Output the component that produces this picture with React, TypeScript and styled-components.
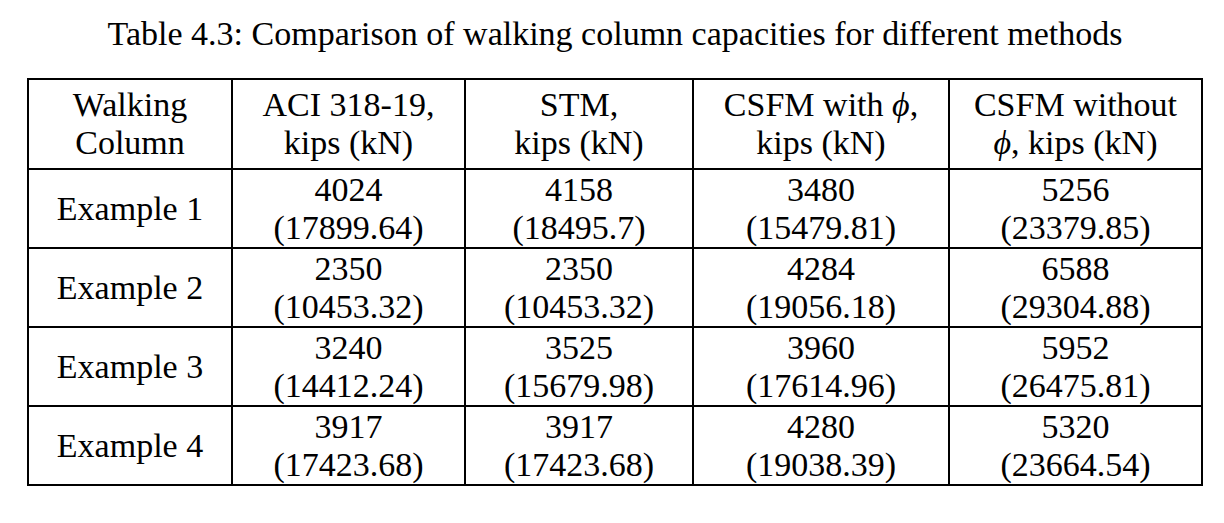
import React from "react";
import styled, { createGlobalStyle } from "styled-components";

interface Row {
  label: string;
  values: [string, string][];
}

const rows: Row[] = [
  {
    label: "Example 1",
    values: [
      ["4024", "(17899.64)"],
      ["4158", "(18495.7)"],
      ["3480", "(15479.81)"],
      ["5256", "(23379.85)"],
    ],
  },
  {
    label: "Example 2",
    values: [
      ["2350", "(10453.32)"],
      ["2350", "(10453.32)"],
      ["4284", "(19056.18)"],
      ["6588", "(29304.88)"],
    ],
  },
  {
    label: "Example 3",
    values: [
      ["3240", "(14412.24)"],
      ["3525", "(15679.98)"],
      ["3960", "(17614.96)"],
      ["5952", "(26475.81)"],
    ],
  },
  {
    label: "Example 4",
    values: [
      ["3917", "(17423.68)"],
      ["3917", "(17423.68)"],
      ["4280", "(19038.39)"],
      ["5320", "(23664.54)"],
    ],
  },
];

// widths between border centres, measured off the reference
const colWidths = [204, 233, 228, 256, 253];

const App: React.FC = () => (
  <Page>
    <GlobalStyle />
    <Caption>Table 4.3: Comparison of walking column capacities for different methods</Caption>
    <Table>
      <colgroup>
        {colWidths.map((w, i) => (
          <col key={i} style={{ width: w }} />
        ))}
      </colgroup>
      <thead>
        <HeadRow>
          <Cell>
            <Line>Walking</Line>
            <Line>Column</Line>
          </Cell>
          <Cell>
            <Line>ACI 318-19,</Line>
            <Line>kips (kN)</Line>
          </Cell>
          <Cell>
            <Line>STM,</Line>
            <Line>kips (kN)</Line>
          </Cell>
          <Cell>
            <Line>
              CSFM with <Phi>ϕ</Phi>,
            </Line>
            <Line>kips (kN)</Line>
          </Cell>
          <Cell>
            <Line>CSFM without</Line>
            <Line>
              <Phi>ϕ</Phi>, kips (kN)
            </Line>
          </Cell>
        </HeadRow>
      </thead>
      <tbody>
        {rows.map((row) => (
          <BodyRow key={row.label}>
            <Cell>
              <Line>{row.label}</Line>
            </Cell>
            {row.values.map(([kips, kn], i) => (
              <Cell key={i}>
                <Line>{kips}</Line>
                <Line>{kn}</Line>
              </Cell>
            ))}
          </BodyRow>
        ))}
      </tbody>
    </Table>
  </Page>
);

const GlobalStyle = createGlobalStyle`
  html, body {
    margin: 0;
    padding: 0;
    background: #ffffff;
  }
  body {
    font-family: "Liberation Serif", "Times New Roman", serif;
    color: #000000;
  }
`;

const Page = styled.div`
  width: 1224px;
  height: 523px;
  padding: 14px 0 0 27px;
  box-sizing: border-box;
  display: flex;
  flex-direction: column;
  align-items: flex-start;
`;

const Caption = styled.div`
  width: 1176px;
  text-align: center;
  font-size: 34px;
  line-height: 40px;
  margin-bottom: 24px;
`;

const Table = styled.table`
  border-collapse: collapse;
  table-layout: fixed;
  width: 1176px;
  border: 2px solid #000;
`;

const HeadRow = styled.tr`
  height: 90px;
`;

const BodyRow = styled.tr`
  height: 79px;
`;

const Cell = styled.td`
  border: 2px solid #000;
  padding: 0;
  text-align: center;
  vertical-align: middle;
  font-size: 34px;
  line-height: 38px;
`;

const Line = styled.div`
  white-space: nowrap;
`;

const Phi = styled.i`
  font-style: italic;
`;

export default App;
